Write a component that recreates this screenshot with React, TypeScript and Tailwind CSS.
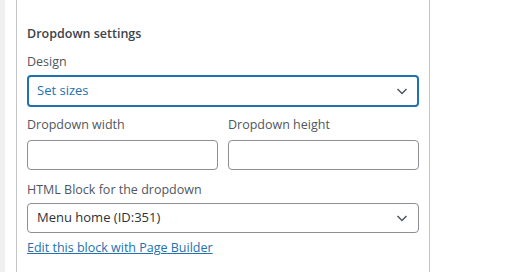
const font = { fontFamily: '"Open Sans", "Noto Sans", Arial, sans-serif' };

function Chevron() {
  return (
    <svg width="16" height="16" viewBox="0 0 16 16" className="shrink-0">
      <path d="M3.5 6l4.5 4.5L12.5 6" fill="none" stroke="#50575e" strokeWidth="1.5" />
    </svg>
  );
}

export default function App() {
  return (
    <div className="flex h-[272px] w-[511px] bg-white text-[#3c434a]" style={font}>
      <div className="w-[5px] shrink-0 bg-[#f0f0f1]" />
      <div className="w-[11px] shrink-0" />
      <div className="w-[414px] shrink-0 border-x border-[#c3c4c7] px-[10px] pt-[24px]">
        <div className="text-[12.5px] font-semibold leading-[20px] text-[#3c434a]">Dropdown settings</div>

        <div className="mt-[9px] text-[12.5px] leading-[18px] text-[#50575e]">Design</div>
        <div className="mt-[4px] flex h-[32px] items-center justify-between rounded-[4px] border-2 border-[#2271b1] pl-[8px] pr-[7px] text-[13px] text-[#2271b1]">
          <span>Set sizes</span>
          <Chevron />
        </div>

        <div className="mt-[9px] grid grid-cols-2 gap-x-[10px]">
          <div>
            <div className="text-[12.5px] leading-[18px] text-[#50575e]">Dropdown width</div>
            <div className="mt-[6px] h-[30px] rounded-[4px] border border-[#8c8f94]" />
          </div>
          <div>
            <div className="text-[12.5px] leading-[18px] text-[#50575e]">Dropdown height</div>
            <div className="mt-[6px] h-[30px] rounded-[4px] border border-[#8c8f94]" />
          </div>
        </div>

        <div className="mt-[11px] text-[12.5px] leading-[18px] text-[#50575e]">HTML Block for the dropdown</div>
        <div className="mt-[4px] flex h-[30px] items-center justify-between rounded-[4px] border border-[#8c8f94] pl-[9px] pr-[8px] text-[13px] text-[#2c3338]">
          <span>Menu home (ID:351)</span>
          <Chevron />
        </div>

        <a href="#" className="mt-[6px] block w-fit text-[12.5px] leading-[18px] text-[#2271b1] underline">
          Edit this block with Page Builder
        </a>
      </div>
    </div>
  );
}
